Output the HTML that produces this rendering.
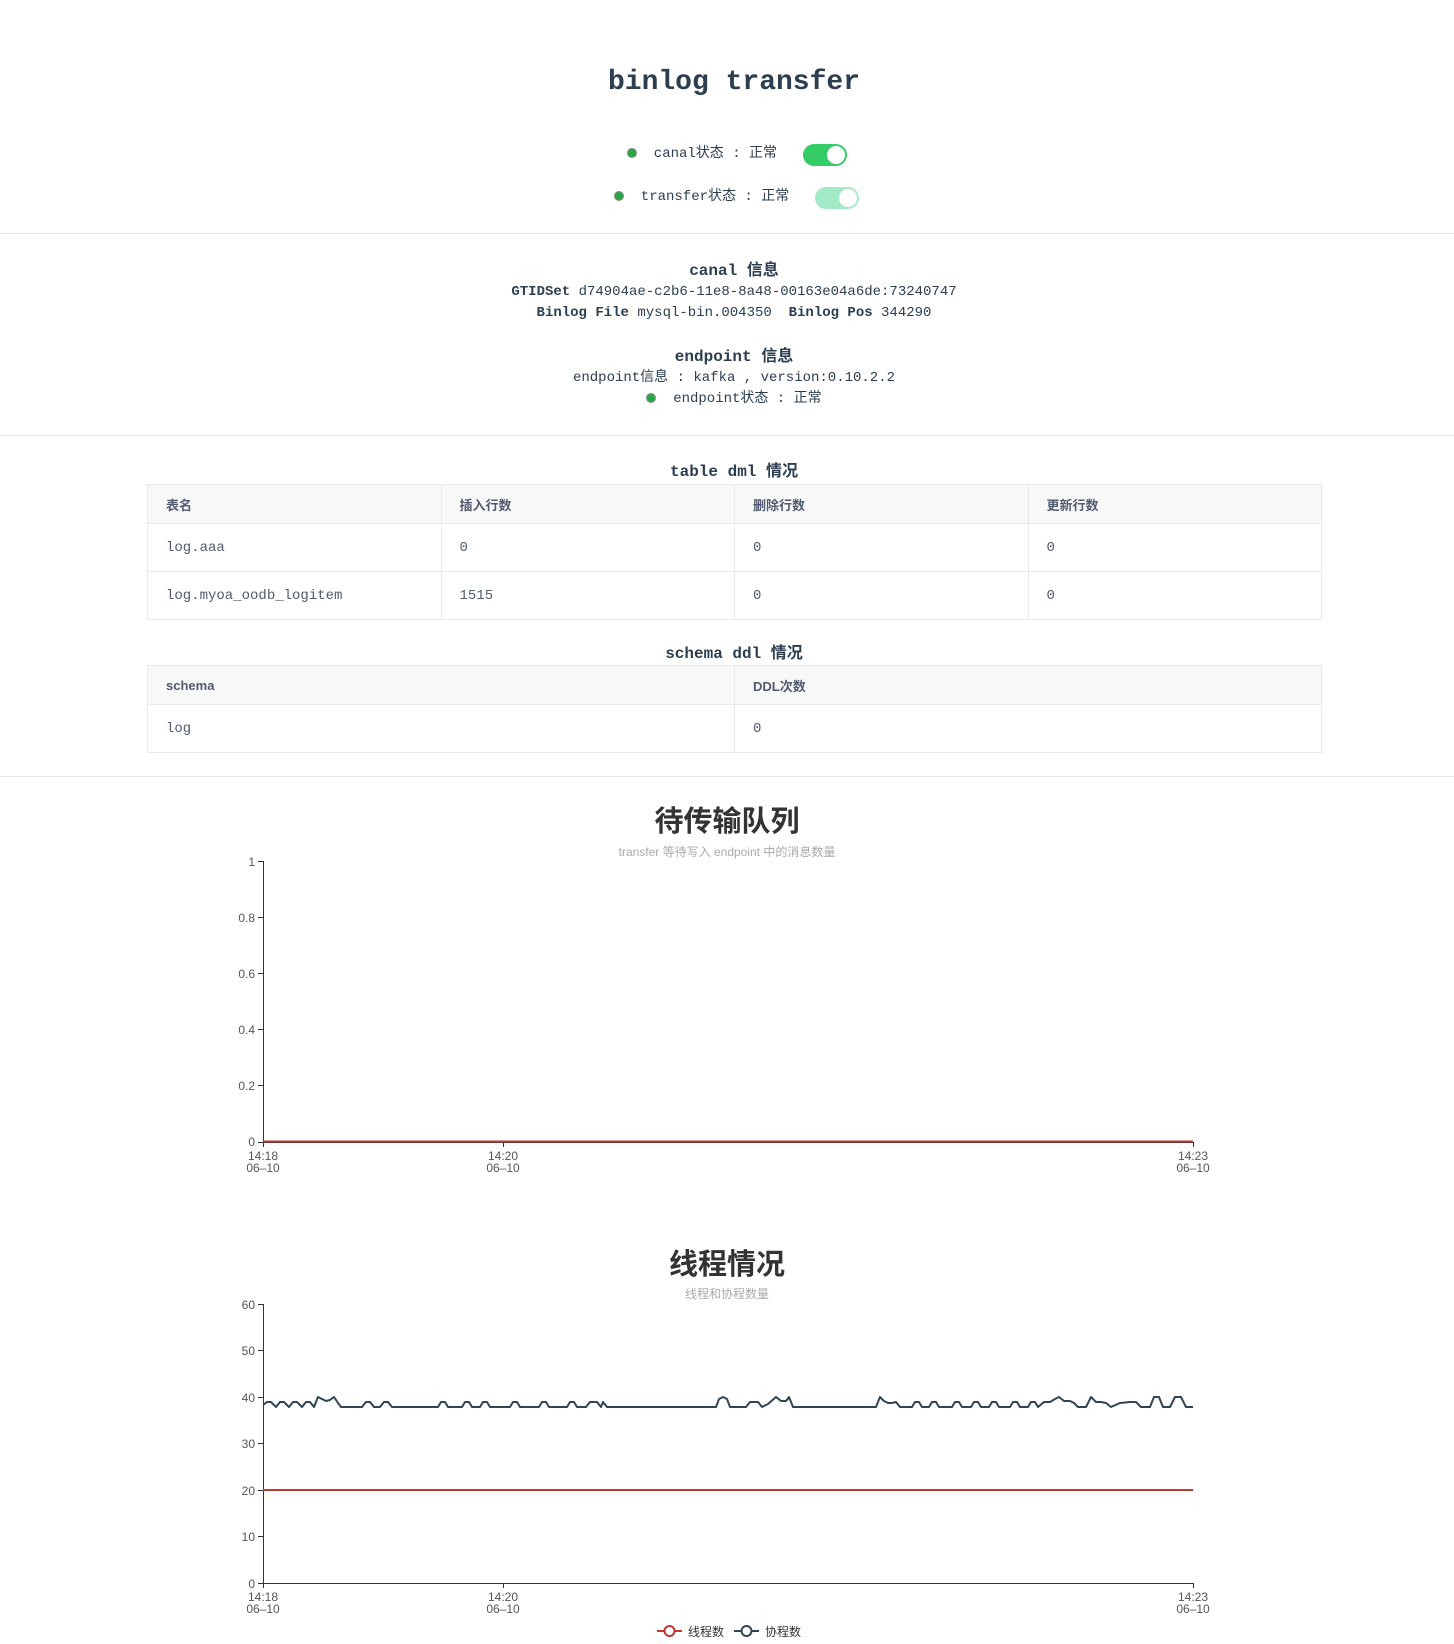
<!DOCTYPE html>
<html><head><meta charset="utf-8">
<style>
html,body{margin:0;padding:0;background:#fff;}
body{width:1454px;height:1644px;position:relative;overflow:hidden;font-family:"Liberation Mono","Noto Sans CJK SC",monospace;color:#2c3e50;}
.abs{position:absolute;}
.c{position:absolute;left:7px;width:1454px;text-align:center;white-space:pre;}
.c.sans{left:0;}
.hr{position:absolute;left:0;width:1454px;height:1px;background:#e8e8e8;}
.dot{display:inline-block;width:8px;height:8px;border-radius:50%;background:#2aa745;border:1px solid #888;vertical-align:middle;}
.tog{position:absolute;width:44px;height:22px;border-radius:11px;}
.tog i{position:absolute;right:2px;top:2px;width:18px;height:18px;border-radius:50%;background:#fff;}
table{position:absolute;left:147px;width:1175px;border-collapse:collapse;border:1px solid #e4e6ea;font-size:14px;color:#515a6e;table-layout:fixed;}
td,th{border:1px solid #e8eaec;text-align:left;padding:0 0 0 18px;font-weight:normal;}
th{background:#f8f8f9;height:38px;font-family:"Liberation Sans","Noto Sans CJK SC",sans-serif;font-size:13px;font-weight:bold;color:#515a6e;}
td{height:47px;}
.sans{font-family:"Liberation Sans","Noto Sans CJK SC",sans-serif;}
</style></head><body>
<div class="c" style="top:67px;font-size:28px;font-weight:bold;">binlog transfer</div>

<div class="abs" style="left:627px;top:144px;font-size:14px;line-height:20px;"><span class="dot"></span>&nbsp;&nbsp;canal状态 : 正常</div>
<div class="tog" style="left:803px;top:144px;background:#33cc66;"><i></i></div>
<div class="abs" style="left:614px;top:187px;font-size:14px;line-height:20px;"><span class="dot"></span>&nbsp;&nbsp;transfer状态 : 正常</div>
<div class="tog" style="left:815px;top:187px;background:#a3ebc6;"><i></i></div>

<div class="hr" style="top:233px;"></div>

<div class="c" style="top:260px;font-size:16px;font-weight:bold;line-height:22px;">canal 信息</div>
<div class="c" style="top:282px;font-size:14px;line-height:21px;"><b>GTIDSet</b> d74904ae-c2b6-11e8-8a48-00163e04a6de:73240747</div>
<div class="c" style="top:303px;font-size:14px;line-height:21px;"><b>Binlog File</b> mysql-bin.004350  <b>Binlog Pos</b> 344290</div>
<div class="c" style="top:346px;font-size:16px;font-weight:bold;line-height:22px;">endpoint 信息</div>
<div class="c" style="top:368px;font-size:14px;line-height:21px;">endpoint信息 : kafka , version:0.10.2.2</div>
<div class="c" style="top:389px;font-size:14px;line-height:21px;"><span class="dot"></span>  endpoint状态 : 正常</div>

<div class="hr" style="top:435px;"></div>

<div class="c" style="top:461px;font-size:16px;font-weight:bold;line-height:22px;">table dml 情况</div>
<table style="top:484px;">
<tr><th>表名</th><th>插入行数</th><th>删除行数</th><th>更新行数</th></tr>
<tr><td>log.aaa</td><td>0</td><td>0</td><td>0</td></tr>
<tr><td>log.myoa_oodb_logitem</td><td>1515</td><td>0</td><td>0</td></tr>
</table>

<div class="c" style="top:643px;font-size:16px;font-weight:bold;line-height:22px;">schema ddl 情况</div>
<table style="top:665px;">
<tr><th>schema</th><th>DDL次数</th></tr>
<tr><td>log</td><td>0</td></tr>
</table>

<div class="hr" style="top:776px;"></div>

<div class="c sans" style="top:803px;font-size:29px;font-weight:bold;color:#333;line-height:38px;">待传输队列</div>
<div class="c sans" style="top:844px;font-size:12px;color:#aaa;line-height:16px;">transfer 等待写入 endpoint 中的消息数量</div>
<div class="c sans" style="top:1246px;font-size:29px;font-weight:bold;color:#333;line-height:38px;">线程情况</div>
<div class="c sans" style="top:1286px;font-size:12px;color:#aaa;line-height:16px;">线程和协程数量</div>

<svg class="abs" style="left:0;top:0" width="1454" height="1644" font-family="Liberation Sans, Noto Sans CJK SC, sans-serif" font-size="12" fill="#555">
 <g stroke="#333" stroke-width="1" fill="none">
  <line x1="263.5" y1="861" x2="263.5" y2="1142"/>
  <line x1="263" y1="1142.5" x2="1194" y2="1142.5"/>
  <line x1="258" y1="861.5" x2="263" y2="861.5"/>
  <line x1="258" y1="917.5" x2="263" y2="917.5"/>
  <line x1="258" y1="973.5" x2="263" y2="973.5"/>
  <line x1="258" y1="1029.5" x2="263" y2="1029.5"/>
  <line x1="258" y1="1085.5" x2="263" y2="1085.5"/>
  <line x1="258" y1="1142.5" x2="263" y2="1142.5"/>
  <line x1="263.5" y1="1142" x2="263.5" y2="1147"/>
  <line x1="503.5" y1="1142" x2="503.5" y2="1147"/>
  <line x1="1193.5" y1="1142" x2="1193.5" y2="1147"/>
 </g>
 <line x1="263" y1="1141.5" x2="1193" y2="1141.5" stroke="#c23531" stroke-width="2"/>
 <g text-anchor="end">
  <text x="255" y="866">1</text><text x="255" y="922">0.8</text><text x="255" y="978">0.6</text>
  <text x="255" y="1034">0.4</text><text x="255" y="1090">0.2</text><text x="255" y="1146">0</text>
 </g>
 <g text-anchor="middle">
  <text x="263" y="1160">14:18</text><text x="263" y="1172">06–10</text>
  <text x="503" y="1160">14:20</text><text x="503" y="1172">06–10</text>
  <text x="1193" y="1160">14:23</text><text x="1193" y="1172">06–10</text>
 </g>

 <g stroke="#333" stroke-width="1" fill="none">
  <line x1="263.5" y1="1304" x2="263.5" y2="1583"/>
  <line x1="263" y1="1583.5" x2="1194" y2="1583.5"/>
  <line x1="258" y1="1304.5" x2="263" y2="1304.5"/>
  <line x1="258" y1="1350.5" x2="263" y2="1350.5"/>
  <line x1="258" y1="1397.5" x2="263" y2="1397.5"/>
  <line x1="258" y1="1443.5" x2="263" y2="1443.5"/>
  <line x1="258" y1="1490.5" x2="263" y2="1490.5"/>
  <line x1="258" y1="1536.5" x2="263" y2="1536.5"/>
  <line x1="258" y1="1583.5" x2="263" y2="1583.5"/>
  <line x1="263.5" y1="1583" x2="263.5" y2="1588"/>
  <line x1="503.5" y1="1583" x2="503.5" y2="1588"/>
  <line x1="1193.5" y1="1583" x2="1193.5" y2="1588"/>
 </g>
 <g text-anchor="end">
  <text x="255" y="1309">60</text><text x="255" y="1355">50</text><text x="255" y="1402">40</text>
  <text x="255" y="1448">30</text><text x="255" y="1495">20</text><text x="255" y="1541">10</text><text x="255" y="1588">0</text>
 </g>
 <g text-anchor="middle">
  <text x="263" y="1601">14:18</text><text x="263" y="1613">06–10</text>
  <text x="503" y="1601">14:20</text><text x="503" y="1613">06–10</text>
  <text x="1193" y="1601">14:23</text><text x="1193" y="1613">06–10</text>
 </g>
 <line x1="263" y1="1490" x2="1193" y2="1490" stroke="#c23531" stroke-width="2"/>
 <polyline fill="none" stroke="#2f4554" stroke-width="2" stroke-linejoin="round" points="
 263,1405 267,1402 271,1402 276,1407 280,1402 284,1402 289,1407 293,1402 297,1402 302,1407 306,1402 310,1402 314,1407 318,1397 322,1399 326,1401 330,1400 334,1397 338,1403 341,1407
 362,1407 366,1402 370,1402 374,1407 380,1407 384,1402 388,1402 392,1407
 438,1407 441,1402 445,1402 448,1407 462,1407 465,1402 469,1402 472,1407 480,1407 483,1402 487,1402 490,1407
 510,1407 513,1402 517,1402 520,1407 539,1407 542,1402 546,1402 549,1407 567,1407 570,1402 574,1402 577,1407
 586,1407 590,1402 597,1402 601,1407 603,1402 607,1407
 716,1407 719,1399 723,1397 727,1399 730,1407 746,1407 750,1402 758,1402 762,1407 768,1404 776,1397 781,1401 786,1401 789,1397 793,1407
 876,1407 880,1397 884,1401 888,1403 892,1403 896,1402 900,1407 912,1407 915,1402 919,1402 922,1407 929,1407 932,1402 936,1402 939,1407
 952,1407 955,1402 959,1402 962,1407 971,1407 974,1402 978,1402 981,1407 989,1407 992,1402 996,1402 999,1407
 1010,1407 1013,1402 1017,1402 1020,1407 1028,1407 1031,1402 1035,1402 1038,1407 1044,1402 1050,1402 1055,1399 1059,1397 1064,1401 1070,1401 1074,1403 1078,1407
 1086,1407 1091,1397 1096,1402 1101,1402 1106,1403 1111,1407 1120,1403 1130,1402 1136,1402 1141,1407
 1150,1407 1154,1397 1159,1397 1163,1407 1170,1407 1175,1397 1181,1397 1186,1407 1193,1407"/>

 <g>
  <line x1="657" y1="1631" x2="682" y2="1631" stroke="#c23531" stroke-width="2"/>
  <circle cx="669.5" cy="1631" r="5" fill="#fff" stroke="#c23531" stroke-width="2"/>
  <text x="688" y="1636" fill="#333">线程数</text>
  <line x1="734" y1="1631" x2="759" y2="1631" stroke="#2f4554" stroke-width="2"/>
  <circle cx="746.5" cy="1631" r="5" fill="#fff" stroke="#2f4554" stroke-width="2"/>
  <text x="765" y="1636" fill="#333">协程数</text>
 </g>
</svg>
</body></html>
